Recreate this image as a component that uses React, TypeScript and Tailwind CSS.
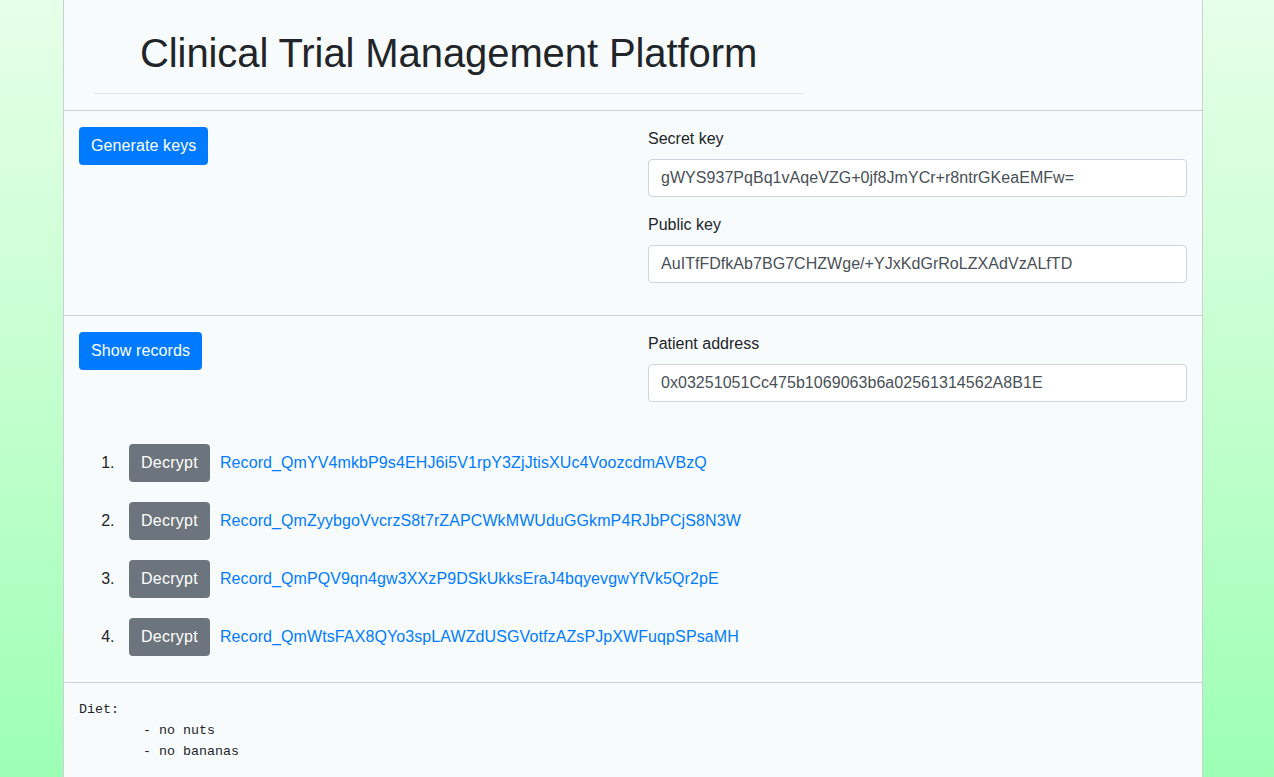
import React from 'react';

const records = [
  'Record_QmYV4mkbP9s4EHJ6i5V1rpY3ZjJtisXUc4VoozcdmAVBzQ',
  'Record_QmZyybgoVvcrzS8t7rZAPCWkMWUduGGkmP4RJbPCjS8N3W',
  'Record_QmPQV9qn4gw3XXzP9DSkUkksEraJ4bqyevgwYfVk5Qr2pE',
  'Record_QmWtsFAX8QYo3spLAWZdUSGVotfzAZsPJpXWFuqpSPsaMH',
];

function Field({ label, value }: { label: string; value: string }) {
  return (
    <div className="mb-4">
      <label className="block mb-2 leading-6 text-[#212529]">{label}</label>
      <input
        readOnly
        value={value}
        className="block w-full h-[38px] px-3 py-1.5 bg-white border border-[#ced4da] rounded text-[#495057] outline-none tracking-[0.04px]"
      />
    </div>
  );
}

export default function App() {
  return (
    <div
      className="min-h-screen bg-gradient-to-b from-[#e6ffe9] to-[#9cffb4] text-base text-[#212529]"
      style={{ fontFamily: '"Liberation Sans", Arial, sans-serif' }}
    >
      <div className="w-[1140px] min-h-screen bg-[#f8fbfc] border-x border-[#cdd0d2] ml-[63px]">
        {/* Header */}
        <div className="pt-[29px]">
          <h1 className="pl-[76px] text-[40px] leading-[48px] font-normal mb-2 text-[#212529] tracking-[-0.09px]">
            Clinical Trial Management Platform
          </h1>
          <hr className="ml-[30px] w-[709px] mt-4 mb-4 border-0 border-t border-[#e3e5e6]" />
        </div>

        {/* Keys */}
        <div className="border-t border-[#cdd0d2] px-[15px] pt-4 pb-4 grid grid-cols-2 gap-[30px]">
          <div>
            <button className="h-[38px] px-3 bg-[#007bff] text-white rounded leading-6 tracking-[0.1px]">Generate keys</button>
          </div>
          <div>
            <Field label="Secret key" value="gWYS937PqBq1vAqeVZG+0jf8JmYCr+r8ntrGKeaEMFw=" />
            <Field label="Public key" value="AuITfFDfkAb7BG7CHZWge/+YJxKdGrRoLZXAdVzALfTD" />
          </div>
        </div>

        {/* Records */}
        <div className="border-t border-[#cdd0d2] px-[15px] pt-4 pb-4">
          <div className="grid grid-cols-2 gap-[30px]">
            <div>
              <button className="h-[38px] px-3 bg-[#007bff] text-white rounded leading-6 tracking-[0.1px]">Show records</button>
            </div>
            <div>
              <Field label="Patient address" value="0x03251051Cc475b1069063b6a02561314562A8B1E" />
            </div>
          </div>
          <ol className="list-decimal pl-10 mt-4">
            {records.map((r) => (
              <li key={r} className="py-[10px] pl-[10px]">
                <div className="flex items-center gap-[10px]">
                  <button className="h-[38px] px-3 bg-[#6c757d] text-white rounded leading-6 tracking-[0.25px]">Decrypt</button>
                  <a href="#" className="text-[#007bff] tracking-[0.1px]">{r}</a>
                </div>
              </li>
            ))}
          </ol>
        </div>

        {/* Decrypted record */}
        <div className="border-t border-[#cdd0d2] px-[15px] pt-4 pb-4">
          <pre
            className="text-[13.33px] leading-[21px] text-[#212529] m-0"
            style={{ fontFamily: '"Liberation Mono", "Courier New", monospace', tabSize: 8 }}
          >
{`Diet:
\t- no nuts
\t- no bananas`}
          </pre>
        </div>
      </div>
    </div>
  );
}
